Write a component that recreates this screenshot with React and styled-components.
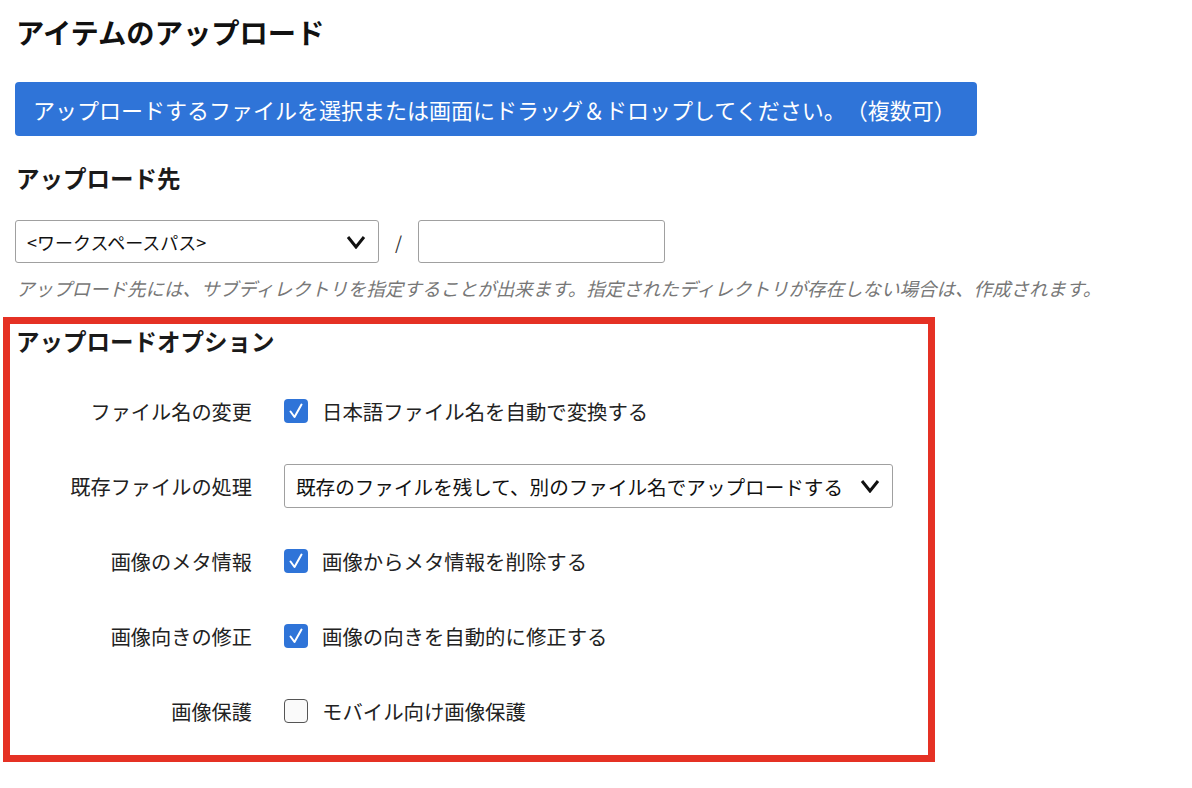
import React from 'react';
import styled, { createGlobalStyle } from 'styled-components';

const GlobalStyle = createGlobalStyle`
    body {
        margin: 0;
        background: #fff;
        font-family: "Noto Sans CJK JP", "Noto Sans", sans-serif;
        color: #222;
    }
`;

const Page = styled.div`
    padding: 14px 15px 30px;
    width: 1192px;
    box-sizing: border-box;
`;

const Title = styled.h1`
    margin: 0;
    padding-left: 1px;
    font-size: 28.3px;
    line-height: 36px;
    font-weight: 700;
    color: #111;
`;

const UploadButton = styled.button`
    display: block;
    margin-top: 32px;
    width: 962px;
    height: 54px;
    padding: 0 18px;
    border: none;
    border-radius: 4px;
    background: #2f74d8;
    color: #fff;
    text-align: left;
    font-family: inherit;
    font-size: 22px;
    text-spacing-trim: space-all;
    cursor: pointer;
`;

const Heading = styled.h2`
    margin: ${props => props.top ?? 27}px 0 0;
    padding-left: 1px;
    font-size: 23.5px;
    line-height: 30px;
    font-weight: 700;
    color: #1a1a1a;
`;

const PathRow = styled.div`
    display: flex;
    align-items: center;
    margin-top: 27px;
`;

const Select = styled.div`
    display: flex;
    align-items: center;
    justify-content: space-between;
    box-sizing: border-box;
    width: ${props => props.width}px;
    height: ${props => props.height || 44}px;
    padding: 0 12px 0 11px;
    border: 1px solid #a0a0a0;
    border-radius: 3px;
    background: #fff;
    font-size: ${props => props.size || 18}px;
    color: #111;
`;

const Slash = styled.span`
    width: 39px;
    text-align: center;
    font-size: 18px;
    color: #333;
`;

const TextInput = styled.input`
    box-sizing: border-box;
    width: 247px;
    height: 43px;
    border: 1px solid #a0a0a0;
    border-radius: 3px;
`;

const Help = styled.p`
    margin: 13px 0 0;
    padding-left: 1px;
    font-size: 18.5px;
    line-height: 24px;
    font-style: italic;
    color: #777;
    white-space: nowrap;
`;

const OptionsBox = styled.section`
    margin: 17px 0 0 -12px;
    width: 932px;
    box-sizing: border-box;
    border: 7px solid #e53124;
    padding: 2px 5px 22px;
`;

const OptionGrid = styled.div`
    display: grid;
    grid-template-columns: 237px 609px;
    column-gap: 32px;
    row-gap: 31px;
    margin-top: 33px;
`;

const Label = styled.div`
    display: flex;
    align-items: center;
    justify-content: flex-end;
    min-height: 44px;
    font-size: 20.2px;
    color: #222;
`;

const Control = styled.label`
    display: flex;
    align-items: center;
    gap: 14px;
    min-height: 44px;
    font-size: 20.4px;
    color: #222;
`;

const Box = styled.span`
    display: inline-flex;
    align-items: center;
    justify-content: center;
    flex: none;
    width: 24px;
    height: 24px;
    box-sizing: border-box;
    border-radius: 4px;
    background: ${props => (props.checked ? '#2f74d8' : '#fafafa')};
    border: ${props => (props.checked ? 'none' : '1.5px solid #555')};
`;

const Chevron = () => (
    <svg width="20" height="14" viewBox="0 0 20 14">
        <path d="M2 2 L10 12 L18 2" fill="none" stroke="#111" strokeWidth="3" strokeLinejoin="miter" />
    </svg>
);

const Check = () => (
    <svg width="18" height="18" viewBox="0 0 18 18">
        <path d="M3.5 9.5 L7.5 15 L14.5 2.5" fill="none" stroke="#fff" strokeWidth="2" strokeLinecap="round" strokeLinejoin="round" />
    </svg>
);

const Checkbox = ({ checked, children }) => (
    <Control>
        <Box checked={checked}>{checked && <Check />}</Box>
        {children}
    </Control>
);

export default function App() {
    return (
        <Page>
            <GlobalStyle />
            <Title>アイテムのアップロード</Title>
            <UploadButton>アップロードするファイルを選択または画面にドラッグ＆ドロップしてください。（複数可）</UploadButton>

            <Heading>アップロード先</Heading>
            <PathRow>
                <Select width={364} height={43}>
                    <span>&lt;ワークスペースパス&gt;</span>
                    <Chevron />
                </Select>
                <Slash>/</Slash>
                <TextInput />
            </PathRow>
            <Help>アップロード先には、サブディレクトリを指定することが出来ます。指定されたディレクトリが存在しない場合は、作成されます。</Help>

            <OptionsBox>
                <Heading top={0}>アップロードオプション</Heading>
                <OptionGrid>
                    <Label>ファイル名の変更</Label>
                    <Checkbox checked>日本語ファイル名を自動で変換する</Checkbox>

                    <Label>既存ファイルの処理</Label>
                    <Select width={609} size={19.6}>
                        <span>既存のファイルを残して、別のファイル名でアップロードする</span>
                        <Chevron />
                    </Select>

                    <Label>画像のメタ情報</Label>
                    <Checkbox checked>画像からメタ情報を削除する</Checkbox>

                    <Label>画像向きの修正</Label>
                    <Checkbox checked>画像の向きを自動的に修正する</Checkbox>

                    <Label>画像保護</Label>
                    <Checkbox>モバイル向け画像保護</Checkbox>
                </OptionGrid>
            </OptionsBox>
        </Page>
    );
}
